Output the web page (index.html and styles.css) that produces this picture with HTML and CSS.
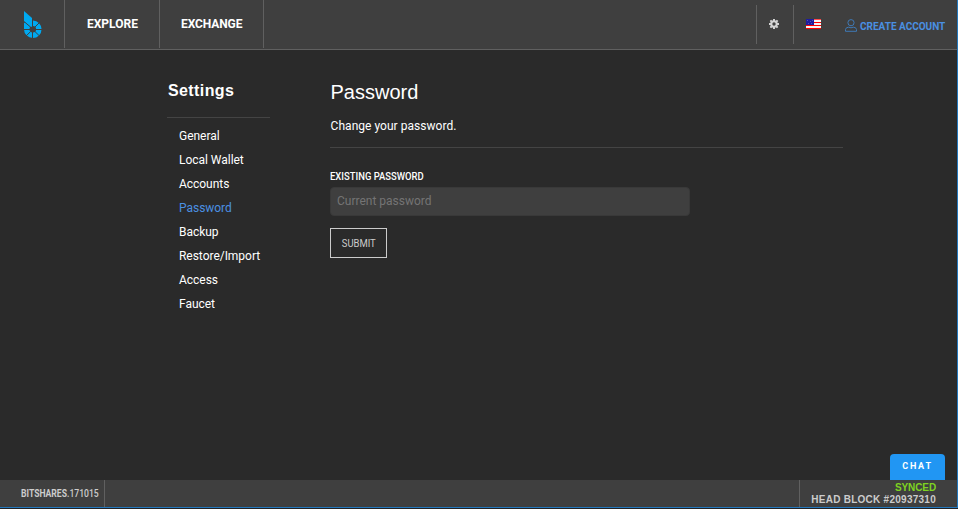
FILE: index.html
```html
<!DOCTYPE html>
<html lang="en">
<head>
<meta charset="utf-8">
<title>Settings - Password</title>
<link rel="stylesheet" href="styles.css">
</head>
<body>
<div class="app">
  <header class="header">
    <a class="logo">
      <svg width="18" height="28" viewBox="0 0 18 28">
        <g fill="#00a9f0">
          <path d="M0 0 L8 7 V16 L0 11 Z"/>
          <path fill-rule="evenodd" d="M0 12 L5 12 L9 9.5 A8.8 8.8 0 1 1 0 18.5 Z M8.8 15 A3.3 3.3 0 1 0 8.8 21.6 A3.3 3.3 0 1 0 8.8 15 Z"/>
        </g>
        <g stroke="#3f3f3f" stroke-width="1">
          <path d="M8.5 8.5 V15.5 M8.5 21 V28 M0 18.5 H6 M12 18.5 H18 M0 10.5 L6.5 16 M15.5 11.5 L11 16 M2 25.1 L6.5 20.6 M15.6 25.1 L11 20.6"/>
        </g>
      </svg>
    </a>
    <a class="nav explore"><span>EXPLORE</span></a>
    <a class="nav exchange"><span>EXCHANGE</span></a>
    <div class="actions">
      <a class="action gear">
        <svg width="10" height="10" viewBox="0 0 10 10">
          <circle cx="5" cy="5" r="2.7" fill="none" stroke="#d3d3d3" stroke-width="2"/>
          <path d="M5 0V2M5 8V10M0 5H2M8 5H10M1.4 1.4L2.7 2.7M7.3 7.3L8.6 8.6M1.4 8.6L2.7 7.3M7.3 2.7L8.6 1.4" stroke="#d3d3d3" stroke-width="2"/>
        </svg>
      </a>
      <a class="action flag">
        <svg width="15" height="10" viewBox="0 0 15 10" shape-rendering="crispEdges">
          <rect width="15" height="10" fill="#f5f5f5"/>
          <path d="M0 0H15V1H0ZM0 3H15V4H0ZM0 6H15V7H0ZM0 9H15V10H0Z" fill="#f00"/>
          <path d="M0 0H15V1H0Z" fill="#ff4d4d"/>
          <rect width="8" height="6" fill="#1d1d9e"/>
          <path d="M1 1H2V2H1ZM4 2H5V3H4ZM6 1H7V2H6ZM2 4H3V5H2ZM5 4H6V5H5Z" fill="#5252b8"/>
        </svg>
      </a>
      <a class="account">
        <svg width="12" height="13" viewBox="0 0 12 13" fill="none" stroke="#3f79b5">
          <circle cx="6" cy="3.7" r="3.1"/>
          <path d="M.5 12.3V10.5Q.7 8.3 3.7 8.2Q6 9.4 8.3 8.2Q11.3 8.3 11.5 10.5V12.3Z"/>
        </svg>
        <span>CREATE ACCOUNT</span>
      </a>
    </div>
  </header>
  <main class="main">
    <nav class="side">
      <h3>Settings</h3>
      <ul>
        <li>General</li>
        <li>Local Wallet</li>
        <li>Accounts</li>
        <li class="active">Password</li>
        <li>Backup</li>
        <li>Restore/Import</li>
        <li>Access</li>
        <li>Faucet</li>
      </ul>
    </nav>
    <section class="content">
      <h1>Password</h1>
      <p>Change your password.</p>
      <form>
        <label for="current"><span class="narrow">EXISTING PASSWORD</span></label>
        <input id="current" type="password" placeholder="Current password">
        <button type="button"><span class="narrow">SUBMIT</span></button>
      </form>
    </section>
  </main>
  <footer class="footer">
    <div class="version"><span class="narrow">BITSHARES<span class="build">.171015</span></span></div>
    <div class="status"><span class="synced">SYNCED</span><span class="block">HEAD BLOCK #20937310</span></div>
  </footer>
  <button class="chat" type="button"><span>CHAT</span></button>
</div>
<div class="edge"></div>
</body>
</html>
```
FILE: styles.css
```css
* { box-sizing: border-box; }
body {
  margin: 0;
  height: 509px;
  overflow: hidden;
  background: #2a2a2a;
  color: #fff;
  font: 12px/24px Roboto, "Liberation Sans", sans-serif;
}
.app {
  position: relative;
  display: flex;
  flex-direction: column;
  height: 508px;
  border-right: 1px solid #2378bd;
  border-bottom: 1px solid #2378bd;
}
.header {
  display: flex;
  height: 50px;
  background: #3f3f3f;
  border-bottom: 1px solid #606060;
}
.logo {
  width: 65px;
  height: 48px;
  padding: 11px 0 0 24px;
  border-right: 1px solid #606060;
}
.logo svg { display: block; }
.nav {
  height: 48px;
  padding-left: 22px;
  border-right: 1px solid #606060;
  font-weight: 700;
  line-height: 48px;
}
.explore { width: 95px; }
.exchange { width: 104px; padding-left: 21px; letter-spacing: -.1px; }
.actions { display: flex; margin-left: auto; padding-top: 5px; }
.action {
  width: 37px;
  height: 39px;
  border-left: 1px solid #606060;
}
.action svg { display: block; margin: 14px 0 0 12px; }
.flag { width: 40px; }
.account {
  display: flex;
  align-items: flex-start;
  width: 124px;
  padding: 14px 0 0 12px;
  color: #4a90e2;
  font-size: 10px;
  font-weight: 700;
  line-height: 15px;
  white-space: nowrap;
}
.account span { margin-left: 3px; }
.main { display: flex; flex: 1; padding: 30px 0 0 167px; }
.side { width: 163px; }
.side h3 {
  width: 103px;
  height: 38px;
  margin: 0 0 6px;
  padding-left: 1px;
  border-bottom: 1px solid #444;
  font: 700 16px/22px "Liberation Sans", sans-serif;
  letter-spacing: .4px;
}
.side ul { margin: 0; padding: 0 0 0 12px; list-style: none; letter-spacing: -.03px; }
.active { color: #4a90e2; }
.content { width: 513px; }
.content h1 {
  margin: 0;
  padding-left: .5px;
  font: 400 20px/24px "Liberation Sans", sans-serif;
}
.content p {
  height: 34px;
  margin: 10px 0 22px;
  padding-left: .6px;
  border-bottom: 1px solid #444;
  letter-spacing: .03px;
}
.content label {
  display: block;
  height: 17px;
  font-size: 11px;
  font-weight: 500;
  line-height: 13px;
}
.narrow {
  display: inline-block;
  transform: scaleX(.86);
  transform-origin: left;
}
.content input {
  display: block;
  width: 360px;
  height: 29px;
  padding: 0 6px 2px;
  border: 1px solid #393939;
  border-radius: 4px;
  background: #3f3f3f;
  color: #fff;
  font: 12px Roboto, sans-serif;
}
.content input::placeholder { color: #747474; }
.content form button {
  width: 57px;
  height: 30px;
  margin-top: 12px;
  padding: 0;
  border: 1px solid #ccc;
  background: transparent;
  color: #ccc;
  font: 11px Roboto, sans-serif;
}
.content button .narrow { transform-origin: center; }
.footer {
  display: flex;
  justify-content: space-between;
  height: 27px;
  background: #3f3f3f;
  color: #ccc;
  font-size: 10px;
}
.version {
  width: 105px;
  padding-left: 21px;
  border-right: 1px solid #606060;
  font-weight: 700;
  line-height: 27px;
}
.build { font-weight: 500; }
.status {
  display: flex;
  flex-direction: column;
  align-items: flex-end;
  width: 158px;
  padding: 2px 21px 0 0;
  border-left: 1px solid #606060;
  font: 700 10px/12px "Liberation Sans", sans-serif;
}
.synced { color: #7ed321; letter-spacing: -.1px; }
.block { letter-spacing: .26px; }
.chat {
  position: absolute;
  right: 12px;
  bottom: 27px;
  width: 55px;
  height: 26px;
  padding: 0 0 2px;
  border: 0;
  border-radius: 4px 4px 0 0;
  background: #2196f3;
  color: #fff;
  font: 700 9px Roboto, sans-serif;
  letter-spacing: 1.8px;
}
.edge { height: 1px; background: #202225; }
```
